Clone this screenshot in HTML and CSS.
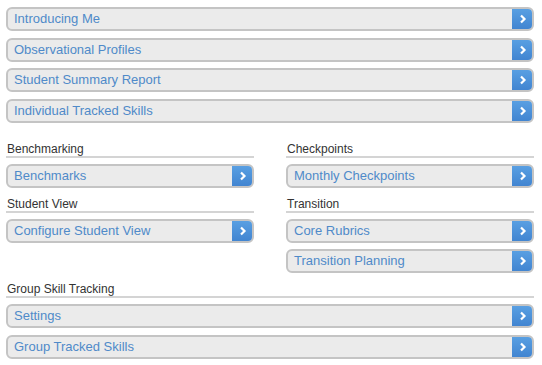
FILE: index.html
```html
<!DOCTYPE html>
<html lang="en">
<head>
    <meta charset="UTF-8">
    <title>Student Menu</title>
    <link rel="stylesheet" href="styles.css">
</head>
<body>
    <div class="page">
        <div class="menu">
            <a class="nav-btn" href="#"><span class="label">Introducing Me</span><span class="go"><svg viewBox="0 0 8 10" width="8" height="10"><polyline points="2,1.5 5.5,5 2,8.5"/></svg></span></a>
            <a class="nav-btn" href="#"><span class="label">Observational Profiles</span><span class="go"><svg viewBox="0 0 8 10" width="8" height="10"><polyline points="2,1.5 5.5,5 2,8.5"/></svg></span></a>
            <a class="nav-btn" href="#"><span class="label">Student Summary Report</span><span class="go"><svg viewBox="0 0 8 10" width="8" height="10"><polyline points="2,1.5 5.5,5 2,8.5"/></svg></span></a>
            <a class="nav-btn" href="#"><span class="label">Individual Tracked Skills</span><span class="go"><svg viewBox="0 0 8 10" width="8" height="10"><polyline points="2,1.5 5.5,5 2,8.5"/></svg></span></a>
        </div>

        <div class="columns">
            <div class="col">
                <div class="section">
                    <h4>Benchmarking</h4>
                    <a class="nav-btn" href="#"><span class="label">Benchmarks</span><span class="go"><svg viewBox="0 0 8 10" width="8" height="10"><polyline points="2,1.5 5.5,5 2,8.5"/></svg></span></a>
                </div>
                <div class="section">
                    <h4>Student View</h4>
                    <a class="nav-btn" href="#"><span class="label">Configure Student View</span><span class="go"><svg viewBox="0 0 8 10" width="8" height="10"><polyline points="2,1.5 5.5,5 2,8.5"/></svg></span></a>
                </div>
            </div>
            <div class="col">
                <div class="section">
                    <h4>Checkpoints</h4>
                    <a class="nav-btn" href="#"><span class="label">Monthly Checkpoints</span><span class="go"><svg viewBox="0 0 8 10" width="8" height="10"><polyline points="2,1.5 5.5,5 2,8.5"/></svg></span></a>
                </div>
                <div class="section">
                    <h4>Transition</h4>
                    <a class="nav-btn" href="#"><span class="label">Core Rubrics</span><span class="go"><svg viewBox="0 0 8 10" width="8" height="10"><polyline points="2,1.5 5.5,5 2,8.5"/></svg></span></a>
                    <a class="nav-btn" href="#"><span class="label">Transition Planning</span><span class="go"><svg viewBox="0 0 8 10" width="8" height="10"><polyline points="2,1.5 5.5,5 2,8.5"/></svg></span></a>
                </div>
            </div>
        </div>

        <div class="section">
            <h4>Group Skill Tracking</h4>
            <a class="nav-btn" href="#"><span class="label">Settings</span><span class="go"><svg viewBox="0 0 8 10" width="8" height="10"><polyline points="2,1.5 5.5,5 2,8.5"/></svg></span></a>
            <a class="nav-btn" href="#"><span class="label">Group Tracked Skills</span><span class="go"><svg viewBox="0 0 8 10" width="8" height="10"><polyline points="2,1.5 5.5,5 2,8.5"/></svg></span></a>
        </div>
    </div>
</body>
</html>
```

FILE: styles.css
```css
body {
    font-family: "Liberation Sans", Arial, sans-serif;
    background: #fff;
    margin: 0;
    padding: 0;
    color: #333;
}
.page {
    padding: 7px 8px 0 6px;
}
.menu {
    margin-bottom: 20px;
}
.nav-btn {
    display: flex;
    height: 24px;
    box-sizing: border-box;
    border: 2px solid #c4c4c4;
    border-radius: 6px;
    background: #ebebeb;
    text-decoration: none;
    margin-bottom: 6.5px;
    overflow: hidden;
}
.section .nav-btn:last-child {
    margin-bottom: 0;
}
.nav-btn .label {
    flex: 1;
    color: #4f8ac9;
    font-size: 13px;
    line-height: 20px;
    padding-left: 6px;
}
.nav-btn .go {
    width: 22px;
    display: flex;
    align-items: center;
    justify-content: center;
    background: linear-gradient(#5ba2e4, #3f82cf);
    margin: -2px -2px -2px 0;
}
.nav-btn .go svg polyline {
    fill: none;
    stroke: #fff;
    stroke-width: 2.2;
}
.columns {
    display: flex;
    gap: 32px;
}
.col {
    flex: 1;
}
.section h4 {
    margin: 0 0 6px;
    font-size: 12px;
    font-weight: normal;
    line-height: 13px;
    padding-left: 1px;
    border-bottom: 2px solid #d4d4d4;
    color: #333;
}
.section {
    margin-top: 10px;
}
.col .section:first-child {
    margin-top: 0;
}
```
